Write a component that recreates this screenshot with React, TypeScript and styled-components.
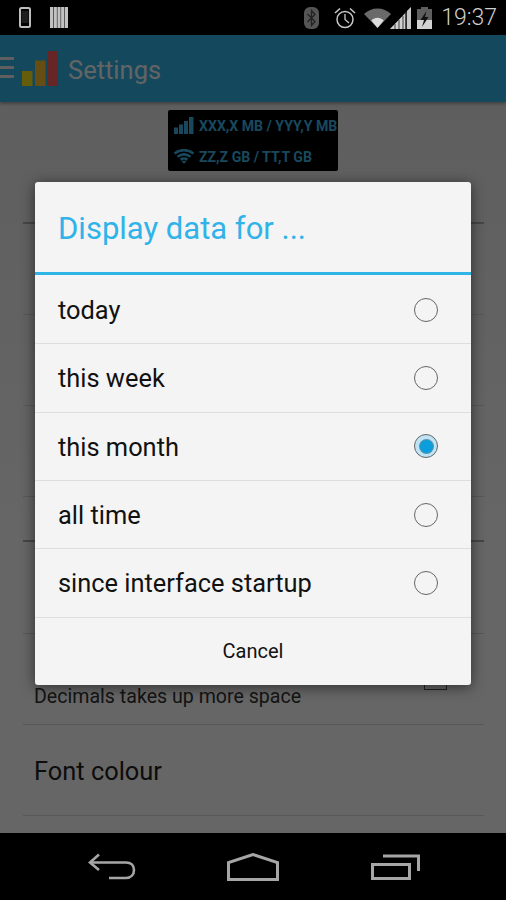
import React from 'react';
import styled, { createGlobalStyle } from 'styled-components';

const GlobalStyle = createGlobalStyle`
  html, body {
    margin: 0;
    padding: 0;
    background: #000;
  }
  body {
    font-family: Roboto, "Noto Sans", sans-serif;
  }
`;

const Screen = styled.div`
  width: 506px;
  height: 900px;
  display: flex;
  flex-direction: column;
  overflow: hidden;
`;

const StatusBar = styled.div`
  height: 35px;
  flex: none;
  background: #000;
  display: flex;
  align-items: center;
  justify-content: space-between;
  padding: 0 9px 0 19px;
  color: #c4c4c4;
`;

const StatusGroup = styled.div<{ $gap: number }>`
  display: flex;
  align-items: center;
  gap: ${props => props.$gap}px;
`;

const Clock = styled.span`
  font-size: 23px;
  font-weight: 300;
  margin-left: 9px;
  color: #cfcfcf;
`;

const Main = styled.div`
  flex: 1;
  position: relative;
  display: flex;
  flex-direction: column;
  min-height: 0;
`;

const AppBar = styled.div`
  height: 67px;
  flex: none;
  background: #33b5e5;
  display: flex;
  align-items: center;
  box-shadow: 0 2px 3px rgba(0, 0, 0, 0.3);
  position: relative;
`;

const AppTitle = styled.span`
  margin: 2px 0 0 10px;
  font-size: 25.5px;
  color: #fff;
  opacity: 0.95;
`;

const Content = styled.div`
  flex: 1;
  background: linear-gradient(#ececec, #fff 60%);
  display: flex;
  flex-direction: column;
  align-items: center;
  overflow: hidden;
  padding-top: 8px;
`;

const Preview = styled.div`
  width: 170px;
  height: 61px;
  flex: none;
  background: #000;
  border-radius: 2px;
  display: flex;
  flex-direction: column;
  gap: 13px;
  padding: 6px 0 0 6px;
  box-sizing: border-box;
`;

const PreviewRow = styled.div`
  display: flex;
  align-items: center;
  gap: 5px;
  height: 18px;
  color: #3fb4e6;
  font-size: 14.1px;
  font-weight: 700;
  white-space: nowrap;
`;

const PreviewText = styled.span`
  padding-top: 2px;
`;

const List = styled.div`
  align-self: stretch;
  margin: 0 22px 0 23px;
  display: flex;
  flex-direction: column;
`;

const SectionLine = styled.div<{ $height: number }>`
  height: ${props => props.$height}px;
  flex: none;
  border-bottom: 2px solid #b0b0b0;
  box-sizing: border-box;
`;

const Row = styled.div<{ $bottomText?: boolean; $height?: number }>`
  height: ${props => props.$height ?? 91}px;
  flex: none;
  box-sizing: border-box;
  border-bottom: 1px solid #dcdcdc;
  padding: ${props => (props.$bottomText ? '0 37px 16px 11px' : '2px 12px 0 11px')};
  display: flex;
  align-items: ${props => (props.$bottomText ? 'flex-end' : 'center')};
  justify-content: space-between;
`;

const RowTitle = styled.div`
  font-size: 25.4px;
  color: #222;
  white-space: nowrap;
`;

const RowSub = styled.div`
  font-size: 19.6px;
  color: #333;
  white-space: nowrap;
`;

const Checkbox = styled.div`
  width: 23px;
  height: 23px;
  box-sizing: border-box;
  border: 1px solid #555;
  margin-bottom: 18px;
`;

const Overlay = styled.div`
  position: absolute;
  inset: 0;
  background: rgba(0, 0, 0, 0.6);
  display: flex;
  align-items: center;
  justify-content: center;
`;

const Dialog = styled.div`
  width: 436px;
  height: 503px;
  margin-top: -1px;
  background: #f4f4f4;
  border-radius: 3px;
  box-shadow: 0 2px 14px rgba(0, 0, 0, 0.55);
  display: flex;
  flex-direction: column;
  overflow: hidden;
`;

const DialogTitle = styled.h2`
  margin: 0;
  height: 93px;
  flex: none;
  box-sizing: border-box;
  border-bottom: 3px solid #2fb4e6;
  padding: 3px 0 0 23px;
  display: flex;
  align-items: center;
  font-size: 31px;
  font-weight: 400;
  color: #2fb3e8;
`;

const Options = styled.div`
  flex: 1;
  display: flex;
  flex-direction: column;
  padding-top: 1px;
`;

const Option = styled.div`
  flex: 1;
  display: flex;
  align-items: center;
  justify-content: space-between;
  padding: 0 33px 0 23px;
  border-bottom: 1px solid #dedede;
  font-size: 25.4px;
  color: #111;
`;

const OptionLabel = styled.span`
  padding-top: 1px;
`;

const Radio = styled.div<{ $checked?: boolean }>`
  width: 24px;
  height: 24px;
  box-sizing: border-box;
  border-radius: 50%;
  border: 1.5px solid #666;
  display: flex;
  align-items: center;
  justify-content: center;
  background: ${props => (props.$checked ? '#bfe4f5' : 'transparent')};

  &::after {
    content: '';
    display: ${props => (props.$checked ? 'block' : 'none')};
    width: 13px;
    height: 13px;
    border-radius: 50%;
    background: #0a9fdc;
    box-shadow: 0 0 0 1px #5a93ad;
  }
`;

const CancelButton = styled.button`
  flex: 1;
  border: none;
  background: none;
  padding: 0;
  font-family: inherit;
  font-size: 20px;
  color: #111;
`;

const NavBar = styled.div`
  height: 67px;
  flex: none;
  background: #000;
  display: grid;
  grid-template-columns: 226px 54px 226px;
  align-items: center;
`;

const NavCell = styled.div<{ $align: string }>`
  display: flex;
  justify-content: ${props => props.$align};
`;

const options = ['today', 'this week', 'this month', 'all time', 'since interface startup'];

function SignalBars() {
  return (
    <svg width="20" height="17" viewBox="0 0 20 17" fill="#3fb4e6">
      <rect x="0" y="10.5" width="4" height="6.5" />
      <rect x="5" y="7.5" width="4" height="9.5" />
      <rect x="10" y="4" width="4" height="13" />
      <rect x="15" y="0" width="4.5" height="17" />
    </svg>
  );
}

function WifiSmall() {
  return (
    <svg width="20" height="15" viewBox="0 0 20 15" fill="none" stroke="#3fb4e6" strokeWidth="2.5">
      <path d="M0.5 4.5C6 0 14 0 19.5 4.5" />
      <path d="M3.5 7.8C7.5 4.8 12.5 4.8 16.5 7.8" />
      <path d="M6.5 10.6C8.7 9.2 11.3 9.2 13.5 10.6" />
      <path d="M7.4 11.8L10 15L12.6 11.8Z" fill="#3fb4e6" stroke="none" />
    </svg>
  );
}

export default function App() {
  return (
    <Screen>
      <GlobalStyle />
      <StatusBar>
        <StatusGroup $gap={19}>
          <svg width="12" height="21" viewBox="0 0 12 21" fill="none">
            <rect x="1" y="1" width="10" height="19" rx="1.5" stroke="#bdbdbd" strokeWidth="2" />
            <rect x="2.5" y="4" width="7" height="12" fill="#1c1c1c" />
          </svg>
          <svg width="18" height="21" viewBox="0 0 18 21" fill="#c2c2c2">
            <rect x="0" y="0" width="3.2" height="21" />
            <rect x="3.7" y="0" width="3.2" height="21" />
            <rect x="7.4" y="0" width="3.2" height="21" />
            <rect x="11.1" y="0" width="3" height="21" />
            <rect x="14.6" y="0" width="3.4" height="21" />
          </svg>
        </StatusGroup>
        <StatusGroup $gap={0}>
          <svg width="15" height="22" viewBox="0 0 15 22" fill="none" style={{ marginRight: 15 }}>
            <rect x="0" y="0" width="15" height="22" rx="6" fill="#555" />
            <path d="M3.5 7L11 14.5L7.5 18.5V3.5L11 7.5L3.5 15" stroke="#222" strokeWidth="1.3" />
          </svg>
          <svg width="22" height="22" viewBox="0 0 22 22" fill="none" stroke="#c8c8c8" style={{ marginRight: 8 }}>
            <circle cx="11" cy="12.5" r="8" strokeWidth="1.5" />
            <path d="M11 7V12.5L15 16" strokeWidth="1.3" />
            <path d="M1 6L6 1.5M21 6L16 1.5" strokeWidth="1.6" />
          </svg>
          <svg width="27" height="20" viewBox="0 0 27 20" style={{ marginRight: -1 }}>
            <path d="M0 6C7 -1.5 20 -1.5 27 6L13.5 20Z" fill="#6a6a6a" />
            <path d="M7.3 12.4C11 9 16 9 19.7 12.4L13.5 20Z" fill="#dcdcdc" />
          </svg>
          <svg width="21" height="22" viewBox="0 0 21 22" style={{ marginRight: 6 }}>
            <path d="M21 0V22H0Z" fill="#4a4a4a" />
            <path d="M15 6.5V22H0L15 6.5Z" fill="#d0d0d0" />
            <path d="M5 17V22M9 13V22M13 9V22M17 4V22" stroke="#000" strokeWidth="0.7" />
            <path d="M17 4V22H21V0Z" fill="#c8c8c8" />
          </svg>
          <svg width="15" height="22" viewBox="0 0 15 22">
            <rect x="4" y="0" width="7" height="3" fill="#5f5f5f" />
            <rect x="0" y="2" width="15" height="20" fill="#5f5f5f" />
            <rect x="0" y="13" width="15" height="9" fill="#d2d2d2" />
            <path d="M9.5 4L3.5 13H7L5 20L11.5 10H8Z" fill="#111" />
          </svg>
          <Clock>19:37</Clock>
        </StatusGroup>
      </StatusBar>

      <Main>
        <AppBar>
          <svg width="15" height="23" viewBox="0 0 15 23" fill="#eee">
            <rect x="0" y="0" width="14" height="3" />
            <rect x="0" y="9" width="14" height="3" />
            <rect x="0" y="18" width="14" height="3" />
          </svg>
          <svg width="36" height="35" viewBox="0 0 36 35" style={{ marginLeft: 7 }}>
            <rect x="0" y="20" width="10.5" height="15" fill="#ffe81e" />
            <rect x="13" y="9.5" width="10.5" height="25.5" fill="#ffc033" />
            <rect x="25.5" y="0" width="10.5" height="35" fill="#ff6060" />
          </svg>
          <AppTitle>Settings</AppTitle>
        </AppBar>

        <Content>
          <Preview>
            <PreviewRow>
              <SignalBars />
              <PreviewText>XXX,X MB / YYY,Y MB</PreviewText>
            </PreviewRow>
            <PreviewRow>
              <WifiSmall />
              <PreviewText>ZZ,Z GB / TT,T GB</PreviewText>
            </PreviewRow>
          </Preview>
          <List>
            <SectionLine $height={53} />
            <Row />
            <Row />
            <Row />
            <SectionLine $height={45} />
            <Row $height={92} />
            <Row $bottomText>
              <RowSub>Decimals takes up more space</RowSub>
              <Checkbox />
            </Row>
            <Row>
              <RowTitle>Font colour</RowTitle>
            </Row>
          </List>
        </Content>

        <Overlay>
          <Dialog>
            <DialogTitle>Display data for ...</DialogTitle>
            <Options>
              {options.map(option => (
                <Option key={option}>
                  <OptionLabel>{option}</OptionLabel>
                  <Radio $checked={option === 'this month'} />
                </Option>
              ))}
              <CancelButton>Cancel</CancelButton>
            </Options>
          </Dialog>
        </Overlay>
      </Main>

      <NavBar>
        <NavCell $align="flex-end">
          <svg width="48" height="27" viewBox="0 0 48 27" fill="none" stroke="#a6a6a6" strokeWidth="2.6" style={{ marginRight: 90 }}>
            <path d="M11 1.5L2 9.5L11 17" />
            <path d="M2.5 9.5H38C43 9.5 46 12.5 46 17C46 21.5 43 25 38 25H21" />
          </svg>
        </NavCell>
        <NavCell $align="center">
          <svg width="52" height="28" viewBox="0 0 52 28" fill="none" stroke="#a6a6a6" strokeWidth="3">
            <path d="M1.5 26.5V9.5L26 1.5L50.5 9.5V26.5Z" />
          </svg>
        </NavCell>
        <NavCell $align="flex-start">
          <svg width="49" height="26" viewBox="0 0 49 26" fill="none" stroke="#a6a6a6" strokeWidth="3" style={{ marginLeft: 91, marginTop: 1 }}>
            <rect x="1.5" y="10.5" width="37" height="14" />
            <path d="M12 2H47.5V17" />
          </svg>
        </NavCell>
      </NavBar>
    </Screen>
  );
}
